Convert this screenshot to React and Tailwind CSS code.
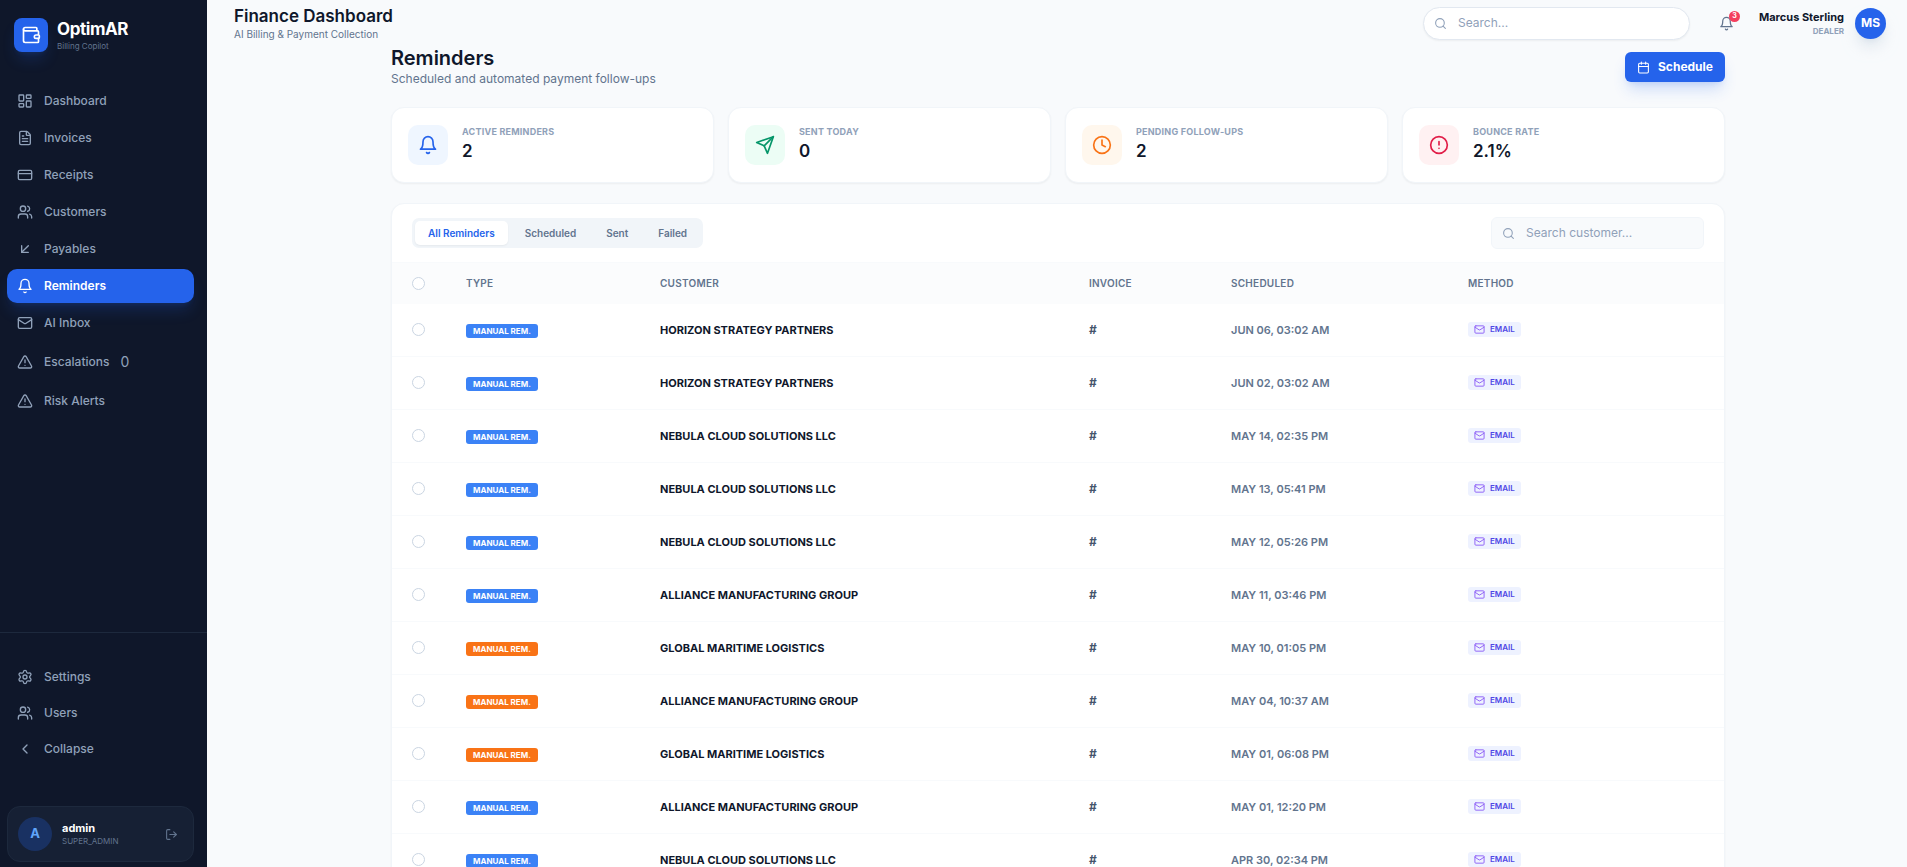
import {
	ArrowDownLeft,
	Calendar,
	ChevronLeft,
	CircleAlert,
	Clock,
	CreditCard,
	FileText,
	LayoutDashboard,
	LogOut,
	Mail,
	Search,
	Settings,
	TriangleAlert,
	Users,
	Wallet,
} from "lucide-react";
import React, { useState } from "react";

const Bell = ({ size = 24, className }) => (
	<svg
		width={size}
		height={size}
		viewBox="0 0 24 24"
		fill="none"
		stroke="currentColor"
		strokeWidth="2"
		strokeLinecap="round"
		strokeLinejoin="round"
		className={className}
		aria-hidden="true"
	>
		<path d="M6 8a6 6 0 0 1 12 0c0 7 3 9 3 9H3s3-2 3-9" />
		<path d="M10.3 21a1.94 1.94 0 0 0 3.4 0" />
	</svg>
);

const Send = ({ size = 24, className }) => (
	<svg
		width={size}
		height={size}
		viewBox="0 0 24 24"
		fill="none"
		stroke="currentColor"
		strokeWidth="2"
		strokeLinecap="round"
		strokeLinejoin="round"
		className={className}
		aria-hidden="true"
	>
		<path d="m22 2-7 20-4-9-9-4Z" />
		<path d="M22 2 11 13" />
	</svg>
);

const mainNav = [
	{ label: "Dashboard", icon: LayoutDashboard },
	{ label: "Invoices", icon: FileText },
	{ label: "Receipts", icon: CreditCard },
	{ label: "Customers", icon: Users },
	{ label: "Payables", icon: ArrowDownLeft },
	{ label: "Reminders", icon: Bell, active: true },
	{ label: "AI Inbox", icon: Mail },
	{ label: "Escalations", icon: TriangleAlert, count: 0 },
	{ label: "Risk Alerts", icon: TriangleAlert },
];

const stats = [
	{ label: "Active Reminders", value: "2", icon: Bell, tone: "bg-[#eff6ff] text-[#2563eb]" },
	{ label: "Sent Today", value: "0", icon: Send, tone: "bg-[#ecfdf5] text-[#059669]" },
	{ label: "Pending Follow-ups", value: "2", icon: Clock, tone: "bg-[#fff7ed] text-[#f97316]" },
	{ label: "Bounce Rate", value: "2.1%", icon: CircleAlert, tone: "bg-[#fff1f2] text-[#e11d48]" },
];

const tabs = ["All Reminders", "Scheduled", "Sent", "Failed"];

const reminders = [
	{ customer: "Horizon Strategy Partners", date: "Jun 06, 03:02 AM" },
	{ customer: "Horizon Strategy Partners", date: "Jun 02, 03:02 AM" },
	{ customer: "Nebula Cloud Solutions LLC", date: "May 14, 02:35 PM" },
	{ customer: "Nebula Cloud Solutions LLC", date: "May 13, 05:41 PM" },
	{ customer: "Nebula Cloud Solutions LLC", date: "May 12, 05:26 PM" },
	{ customer: "Alliance Manufacturing Group", date: "May 11, 03:46 PM" },
	{ customer: "Global Maritime Logistics", date: "May 10, 01:05 PM", urgent: true },
	{ customer: "Alliance Manufacturing Group", date: "May 04, 10:37 AM", urgent: true },
	{ customer: "Global Maritime Logistics", date: "May 01, 06:08 PM", urgent: true },
	{ customer: "Alliance Manufacturing Group", date: "May 01, 12:20 PM" },
	{ customer: "Nebula Cloud Solutions LLC", date: "Apr 30, 02:34 PM" },
];

const NavItem = ({ label, icon: Icon, active, count }) => (
	<a
		href="#"
		className={`flex items-center gap-[11px] rounded-[10px] px-[10px] py-[7px] text-[12px] leading-[20px] ${
			active
				? "bg-[#2563eb] font-semibold text-white shadow-lg shadow-[#2563eb]/20"
				: "font-medium text-slate-400 hover:text-white"
		}`}
	>
		<Icon size={16} className="shrink-0" />
		<span>{label}</span>
		{count !== undefined && (
			<span className="text-[14px] leading-[24px] font-normal">{count}</span>
		)}
	</a>
);

const Sidebar = () => (
	<aside className="flex w-[207px] shrink-0 flex-col bg-[#0f172a]">
		<div className="flex items-center gap-[9px] px-[14px] pt-[18px]">
			<div className="flex size-[34px] items-center justify-center rounded-lg bg-[#2563eb] text-white shadow-lg shadow-[#2563eb]/20">
				<Wallet size={20} />
			</div>
			<div>
				<p className="text-[17px] leading-[22px] font-bold tracking-tight text-white">
					OptimAR
				</p>
				<p className="text-[8px] leading-[12px] text-slate-500">Billing Copilot</p>
			</div>
		</div>
		<nav className="mt-8 flex flex-col gap-[3px] pr-[13px] pl-[7px]">
			{mainNav.map((item) => (
				<NavItem key={item.label} {...item} />
			))}
		</nav>
		<div className="mt-auto border-t border-slate-800 pt-[27px] pr-[13px] pb-[5px] pl-[7px]">
			<div className="flex flex-col gap-[2px]">
				<NavItem label="Settings" icon={Settings} />
				<NavItem label="Users" icon={Users} />
				<button className="flex items-center gap-[11px] rounded-[10px] px-[10px] py-[7px] text-[12px] leading-[20px] font-medium text-slate-400">
					<ChevronLeft size={16} />
					Collapse
				</button>
			</div>
			<div className="mt-10 flex items-center gap-[10px] rounded-[13px] border border-slate-800 bg-slate-800/50 px-[10px] py-[10px]">
				<div className="flex size-[34px] items-center justify-center rounded-full bg-[#2563eb]/25 text-[13px] font-bold text-[#60a5fa]">
					A
				</div>
				<div className="flex-1">
					<p className="text-[11px] leading-[13px] font-bold text-white">admin</p>
					<p className="text-[8px] leading-[12px] text-slate-500">SUPER_ADMIN</p>
				</div>
				<button aria-label="Log out" className="mr-[5px] text-slate-500">
					<LogOut size={13} />
				</button>
			</div>
		</div>
	</aside>
);

const Header = () => (
	<header className="flex h-[46px] shrink-0 items-center justify-between pr-[21px] pl-[27px]">
		<div>
			<h1 className="text-[17px] leading-[22px] font-semibold text-slate-900">
				Finance Dashboard
			</h1>
			<p className="text-[10px] leading-[14px] text-slate-500">
				AI Billing &amp; Payment Collection
			</p>
		</div>
		<div className="flex items-center">
			<label className="flex h-[33px] w-[267px] items-center gap-[11px] rounded-full border border-slate-200 bg-white px-[10px] shadow-xs">
				<Search size={13} className="text-slate-400" />
				<input
					type="text"
					aria-label="Search"
					placeholder="Search..."
					className="min-w-0 flex-1 bg-transparent text-[12px] outline-none placeholder:text-slate-400"
				/>
			</label>
			<button aria-label="Notifications" className="relative ml-[29px] text-slate-500">
				<Bell size={15} />
				<span className="absolute -top-[5px] -right-[6px] flex size-[11px] items-center justify-center rounded-full bg-[#f43f5e] text-[7px] font-bold text-white">
					3
				</span>
			</button>
			<div className="ml-[25px] text-right">
				<p className="text-[11px] leading-[16px] font-bold text-slate-900">
					Marcus Sterling
				</p>
				<p className="text-[8px] leading-[13px] font-bold text-slate-400">DEALER</p>
			</div>
			<div className="ml-[11px] flex size-[31px] items-center justify-center rounded-full bg-[#2563eb] text-[12px] font-bold text-white shadow-lg shadow-slate-300/60">
				MS
			</div>
		</div>
	</header>
);

const StatCard = ({ label, value, icon: Icon, tone }) => (
	<div className="flex items-start gap-[14px] rounded-[13px] border border-slate-100 bg-white px-4 py-[17px] shadow-xs">
		<div className={`flex size-10 items-center justify-center rounded-[10px] ${tone}`}>
			<Icon size={20} />
		</div>
		<div>
			<p className="text-[9px] leading-[14px] font-bold tracking-wide text-slate-400 uppercase">
				{label}
			</p>
			<p className="text-[17px] leading-[24px] font-semibold text-slate-900">{value}</p>
		</div>
	</div>
);

const RoundCheck = ({ label }) => (
	<input
		type="checkbox"
		aria-label={label}
		className="block size-[13px] appearance-none rounded-full border border-slate-300 bg-white checked:bg-[#2563eb]"
	/>
);

const ReminderRow = ({ customer, date, urgent }) => (
	<tr className="border-b border-slate-50 text-[11px] leading-[20px] font-semibold">
		<td className="py-4 pl-5">
			<RoundCheck label={`Select ${customer}, ${date}`} />
		</td>
		<td className="pt-[3px] pl-5">
			<span
				className={`block w-fit rounded-[3px] px-[7px] text-[8px] leading-[14px] font-bold text-white uppercase ${
					urgent ? "bg-[#f97316]" : "bg-[#3b82f6]"
				}`}
			>
				Manual Rem.
			</span>
		</td>
		<td className="py-4 pl-5 font-bold text-slate-900 uppercase">{customer}</td>
		<td className="py-4 pl-5 text-[12px] font-bold text-slate-600">#</td>
		<td className="py-4 pl-5 text-slate-500 uppercase">{date}</td>
		<td className="pl-5">
			<span className="flex w-fit items-center gap-[5px] rounded-[3px] bg-[#eef2ff] px-[6px] text-[8px] leading-[15px] text-[#4f46e5] uppercase">
				<Mail size={11} className="text-[#8b5cf6]" />
				Email
			</span>
		</td>
	</tr>
);

const RemindersTable = () => (
	<table className="w-full table-fixed text-left">
		<thead>
			<tr className="h-[41px] border-t border-slate-50 bg-slate-50/60 text-[10px] tracking-wide text-slate-500 uppercase">
				<th className="w-[54px] pl-5">
					<RoundCheck label="Select all reminders" />
				</th>
				<th className="w-[194px] pl-5 font-semibold">Type</th>
				<th className="pl-5 font-semibold">Customer</th>
				<th className="w-[142px] pl-5 font-semibold">Invoice</th>
				<th className="w-[237px] pl-5 font-semibold">Scheduled</th>
				<th className="w-[276px] pl-5 font-semibold">Method</th>
			</tr>
		</thead>
		<tbody>
			{reminders.map((r) => (
				<ReminderRow key={r.date} {...r} />
			))}
		</tbody>
	</table>
);

const App = () => {
	const [tab, setTab] = useState("All Reminders");

	return (
		<div className="flex h-screen overflow-hidden bg-slate-50 font-['Inter','Open_Sans',sans-serif]">
			<Sidebar />
			<div className="flex min-w-0 flex-1 flex-col overflow-hidden">
				<Header />
				<main className="min-h-0 flex-1 overflow-hidden pl-[2px]">
					<div className="mx-auto max-w-[1334px]">
						<div className="flex items-center justify-between">
							<div>
								<h2 className="text-[20px] leading-[24px] font-semibold text-slate-900">
									Reminders
								</h2>
								<p className="text-[12px] leading-[18px] text-slate-500">
									Scheduled and automated payment follow-ups
								</p>
							</div>
							<button className="flex h-[30px] items-center gap-2 rounded-md bg-[#2563eb] px-3 text-[12px] font-bold text-white shadow-lg shadow-[#2563eb]/20">
								<Calendar size={13} />
								Schedule
							</button>
						</div>

						<div className="mt-[19px] grid grid-cols-4 gap-[14px]">
							{stats.map((s) => (
								<StatCard key={s.label} {...s} />
							))}
						</div>

						<section className="mt-5 overflow-hidden rounded-[13px] border border-slate-100 bg-white shadow-xs">
							<div className="flex items-center justify-between px-5 py-[13px]">
								<div className="flex gap-1 rounded-[7px] bg-slate-100 p-[3px]">
									{tabs.map((t) => (
										<button
											key={t}
											onClick={() => setTab(t)}
											className={`rounded-[5px] px-[13px] text-[10px] leading-[24px] font-semibold ${
												tab === t ? "bg-white text-[#2563eb] shadow-xs" : "text-slate-500"
											}`}
										>
											{t}
										</button>
									))}
								</div>
								<label className="flex h-8 w-[213px] items-center gap-[11px] rounded-md border border-slate-100 bg-slate-50 px-[10px]">
									<Search size={13} className="text-slate-400" />
									<input
										type="text"
										aria-label="Search customer"
										placeholder="Search customer..."
										className="min-w-0 flex-1 bg-transparent text-[12px] outline-none placeholder:text-slate-400"
									/>
								</label>
							</div>
							<RemindersTable />
						</section>
					</div>
				</main>
			</div>
		</div>
	);
};

export default App;
